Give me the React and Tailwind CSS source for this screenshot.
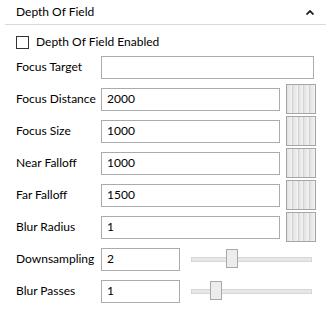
import React from "react";

const font = { fontFamily: '"Segoe UI", Lato, "Noto Sans", sans-serif' };

const Swatch = () => {
  return (
    <div className="ml-[6px] flex h-[30px] w-[30px] border border-[#a6a6a6]">
      {[0, 1, 2, 3, 4].map((i) => (
        <div
          key={i}
          className="flex-1 border-r border-[#d2d2d2] bg-gradient-to-r from-[#e2e2e2] to-[#f3f3f3] last:border-r-0"
        ></div>
      ))}
    </div>
  );
};

const Field = ({ value, width }) => {
  return (
    <div
      className={`flex h-[23px] items-center border border-[#ababab] bg-white pl-[5px] text-[12px] text-black ${width}`}
    >
      {value}
    </div>
  );
};

const Slider = ({ left }) => {
  return (
    <div className="relative ml-[11px] h-[20px] w-[121px]">
      <div className="absolute left-0 right-0 top-[8px] h-[5px] border border-[#d6d6d6] bg-[#e7e7e7]"></div>
      <div
        className="absolute top-0 h-[19px] w-[12px] border border-[#a9a9a9] bg-[#ececec]"
        style={{ left }}
      ></div>
    </div>
  );
};

const Row = ({ label, children }) => {
  return (
    <div className="flex h-[32px] items-center">
      <div className="w-[85px] text-[12px] text-black">{label}</div>
      {children}
    </div>
  );
};

const App = () => {
  const swatchRows = [
    { label: "Focus Distance", value: "2000" },
    { label: "Focus Size", value: "1000" },
    { label: "Near Falloff", value: "1000" },
    { label: "Far Falloff", value: "1500" },
    { label: "Blur Radius", value: "1" },
  ];

  return (
    <div className="h-[310px] w-[331px] overflow-hidden bg-white" style={font}>
      {/* header */}
      <div className="px-[5px]">
        <div className="flex h-[25px] items-center justify-between border-b border-[#dadada] pl-[11px] pr-[12px]">
          <span className="text-[12px] text-black">Depth Of Field</span>
          <svg width="8" height="5" viewBox="0 0 8 5">
            <path d="M0.5 4.5 L4 1 L7.5 4.5" fill="none" stroke="#222" strokeWidth="1.8" />
          </svg>
        </div>
      </div>

      <div className="pl-4">
        {/* enabled checkbox */}
        <div className="flex h-[26px] items-center pt-[8px]">
          <div className="h-[13px] w-[13px] border border-[#333] bg-white"></div>
          <span className="ml-[7px] text-[12px] text-black">Depth Of Field Enabled</span>
        </div>

        <Row label="Focus Target">
          <Field value="" width="w-[213px]" />
        </Row>

        {swatchRows.map((r) => (
          <Row key={r.label} label={r.label}>
            <Field value={r.value} width="w-[179px]" />
            <Swatch />
          </Row>
        ))}

        <Row label="Downsampling">
          <Field value="2" width="w-[79px]" />
          <Slider left={35} />
        </Row>
        <Row label="Blur Passes">
          <Field value="1" width="w-[79px]" />
          <Slider left={19} />
        </Row>
      </div>
    </div>
  );
};

export default App;
